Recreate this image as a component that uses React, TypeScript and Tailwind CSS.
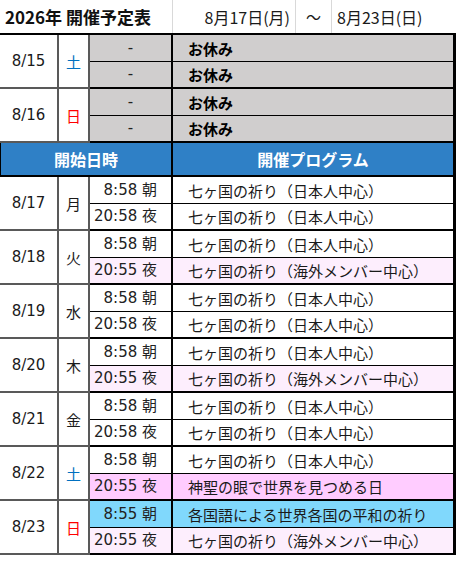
import React from 'react';

type Kind = 'off' | 'plain' | 'pink' | 'hot' | 'cyan';

type Slot = { time: string; prog: string; kind: Kind };

type Day = { date: string; wd: string; wdColor: string; slots: [Slot, Slot] };

// text kept as unicode escapes so the file stays plain ASCII
const ASA = '\u671d'; // morning
const YORU = '\u591c'; // night
const JP = '\u4e03\u30f6\u56fd\u306e\u7948\u308a\uff08\u65e5\u672c\u4eba\u4e2d\u5fc3\uff09';
const OV = '\u4e03\u30f6\u56fd\u306e\u7948\u308a\uff08\u6d77\u5916\u30e1\u30f3\u30d0\u30fc\u4e2d\u5fc3\uff09';
const SEIGAN = '\u795e\u8056\u306e\u773c\u3067\u4e16\u754c\u3092\u898b\u3064\u3081\u308b\u65e5';
const HEIWA = '\u5404\u56fd\u8a9e\u306b\u3088\u308b\u4e16\u754c\u5404\u56fd\u306e\u5e73\u548c\u306e\u7948\u308a';

const off: Slot = { time: '-', prog: '\u304a\u4f11\u307f', kind: 'off' };

const DARK = 'text-[#1a1a1a]';
const BLUE = 'text-[#0070c0]';
const RED = 'text-[#ff0000]';

const before: Day[] = [
  { date: '8/15', wd: '\u571f', wdColor: BLUE, slots: [off, off] },
  { date: '8/16', wd: '\u65e5', wdColor: RED, slots: [off, off] },
];

const week: Day[] = [
  {
    date: '8/17',
    wd: '\u6708',
    wdColor: DARK,
    slots: [
      { time: `8:58 ${ASA}`, prog: JP, kind: 'plain' },
      { time: `20:58 ${YORU}`, prog: JP, kind: 'plain' },
    ],
  },
  {
    date: '8/18',
    wd: '\u706b',
    wdColor: DARK,
    slots: [
      { time: `8:58 ${ASA}`, prog: JP, kind: 'plain' },
      { time: `20:55 ${YORU}`, prog: OV, kind: 'pink' },
    ],
  },
  {
    date: '8/19',
    wd: '\u6c34',
    wdColor: DARK,
    slots: [
      { time: `8:58 ${ASA}`, prog: JP, kind: 'plain' },
      { time: `20:58 ${YORU}`, prog: JP, kind: 'plain' },
    ],
  },
  {
    date: '8/20',
    wd: '\u6728',
    wdColor: DARK,
    slots: [
      { time: `8:58 ${ASA}`, prog: JP, kind: 'plain' },
      { time: `20:55 ${YORU}`, prog: OV, kind: 'pink' },
    ],
  },
  {
    date: '8/21',
    wd: '\u91d1',
    wdColor: DARK,
    slots: [
      { time: `8:58 ${ASA}`, prog: JP, kind: 'plain' },
      { time: `20:58 ${YORU}`, prog: JP, kind: 'plain' },
    ],
  },
  {
    date: '8/22',
    wd: '\u571f',
    wdColor: BLUE,
    slots: [
      { time: `8:58 ${ASA}`, prog: JP, kind: 'plain' },
      { time: `20:55 ${YORU}`, prog: SEIGAN, kind: 'hot' },
    ],
  },
  {
    date: '8/23',
    wd: '\u65e5',
    wdColor: RED,
    slots: [
      { time: `8:55 ${ASA}`, prog: HEIWA, kind: 'cyan' },
      { time: `20:55 ${YORU}`, prog: OV, kind: 'pink' },
    ],
  },
];

const bg: Record<Kind, string> = {
  off: 'bg-[#d0cece]',
  plain: 'bg-white',
  pink: 'bg-[#fdeefd]',
  hot: 'bg-[#ffccff]',
  cyan: 'bg-[#80d8fc]',
};

// wide latin digits (Meiryo-like), CJK falls through to Noto
const NUM = "font-['DejaVu_Sans','Noto_Sans_CJK_JP',sans-serif]";

function SlotRow({ slot, last }: { slot: Slot; last: boolean }) {
  const isOff = slot.kind === 'off';
  return (
    <div className={`flex h-[27px] border-black ${last ? 'border-b-2' : 'border-b'} ${bg[slot.kind]}`}>
      <div
        className={`flex w-[83px] shrink-0 items-center whitespace-nowrap border-r-2 border-black text-[#222] ${NUM} ${
          isOff ? 'justify-center' : 'justify-end pr-[14px]'
        }`}
      >
        {slot.time}
      </div>
      <div
        className={`flex flex-1 items-center whitespace-nowrap border-r-[3px] border-black pl-[15px] ${
          isOff ? 'font-bold text-black' : 'text-[#1a1a1a]'
        }`}
      >
        {slot.prog}
      </div>
    </div>
  );
}

function DayBlock({ day }: { day: Day }) {
  return (
    <div className="flex">
      <div
        className={`flex h-[54px] w-[59px] shrink-0 items-center justify-center border-r-2 border-b-2 border-[#595959] bg-white text-[#1a1a1a] ${NUM}`}
      >
        {day.date}
      </div>
      <div
        className={`flex h-[54px] w-[31px] shrink-0 items-center justify-center border-r-2 border-b-2 border-[#595959] bg-white ${day.wdColor}`}
      >
        {day.wd}
      </div>
      <div className="flex flex-1 flex-col">
        <SlotRow slot={day.slots[0]} last={false} />
        <SlotRow slot={day.slots[1]} last={true} />
      </div>
    </div>
  );
}

export default function App() {
  return (
    <div className="h-[564px] w-[458px] bg-white font-['Noto_Sans_CJK_JP',sans-serif] text-[15px] leading-none">
      {/* Title bar */}
      <div className="flex h-[33px] whitespace-nowrap">
        <div className="flex w-[173px] shrink-0 items-center border-r border-[#d9d9d9] pl-[5px] text-[17px] font-bold text-[#111]">
          {'2026\u5e74 \u958b\u50ac\u4e88\u5b9a\u8868'}
        </div>
        <div className="flex w-[123px] shrink-0 items-center justify-end border-r border-[#d9d9d9] pr-[5px] text-[16px] text-[#1a1a1a]">
          {'8\u670817\u65e5(\u6708)'}
        </div>
        <div className="flex w-[36px] shrink-0 items-center justify-center border-r border-[#d9d9d9] text-[15px] text-[#1a1a1a]">
          {'\u301c'}
        </div>
        <div className="flex flex-1 items-center pl-[5px] text-[16px] text-[#1a1a1a]">
          {'8\u670823\u65e5(\u65e5)'}
        </div>
      </div>

      {/* Schedule */}
      <div className="w-[456px] border-t-2 border-black">
        {before.map((d) => (
          <DayBlock key={d.date} day={d} />
        ))}

        <div className="flex h-[34px] border-b-2 border-l border-black bg-[#2f80c6] text-[16px] font-bold text-white">
          <div className="flex w-[172px] shrink-0 items-center justify-center border-r-2 border-black">
            {'\u958b\u59cb\u65e5\u6642'}
          </div>
          <div className="flex flex-1 items-center justify-center border-r-[3px] border-black">
            {'\u958b\u50ac\u30d7\u30ed\u30b0\u30e9\u30e0'}
          </div>
        </div>

        {week.map((d) => (
          <DayBlock key={d.date} day={d} />
        ))}
      </div>
    </div>
  );
}
